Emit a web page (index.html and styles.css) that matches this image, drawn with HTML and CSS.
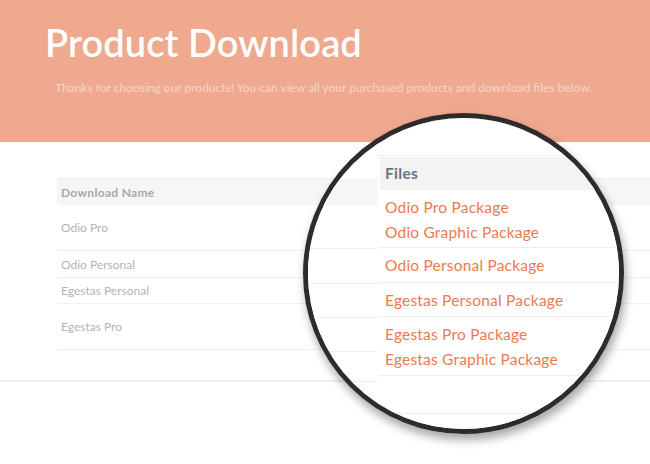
FILE: index.html
```html
<!DOCTYPE html>
<html>
<head>
<meta charset="utf-8">
<link rel="stylesheet" href="styles.css">
</head>
<body>
<header class="hero">
  <h1 class="hero-title">Product Download</h1>
  <p class="hero-sub">Thanks for choosing our products! You can view all your purchased products and download files below.</p>
</header>
<section class="downloads">
  <div class="dl-table">
    <div class="dl-head">Download Name</div>
    <div class="dl-row tall">Odio Pro</div>
    <div class="dl-row">Odio Personal</div>
    <div class="dl-row short">Egestas Personal</div>
    <div class="dl-row tall">Egestas Pro</div>
  </div>
</section>
<div class="lens">
  <div class="zoom">
    <div class="zoom-left">
      <div class="zl-space"></div>
      <div class="zl-band"></div>
      <div class="zl-row r1"></div>
      <div class="zl-row r2"></div>
      <div class="zl-row r3"></div>
      <div class="zl-row r4"></div>
      <div class="zl-row r5"></div>
    </div>
    <div class="zoom-right">
      <div class="zr-space"></div>
      <div class="zr-head">Files</div>
      <div class="zr-row h58"><span class="file">Odio Pro Package</span><span class="file">Odio Graphic Package</span></div>
      <div class="zr-row h35"><span class="file">Odio Personal Package</span></div>
      <div class="zr-row h34"><span class="file">Egestas Personal Package</span></div>
      <div class="zr-row h59"><span class="file">Egestas Pro Package</span><span class="file">Egestas Graphic Package</span></div>
      <div class="zr-row h38"></div>
    </div>
  </div>
</div>
</body>
</html>
```
FILE: styles.css
```css
html, body {
  margin: 0;
  padding: 0;
}
body {
  width: 650px;
  height: 464px;
  overflow: hidden;
  position: relative;
  background: #ffffff;
  font-family: Lato, "Noto Sans", sans-serif;
}
.hero {
  height: 142px;
  box-sizing: border-box;
  background: #eea98e;
  padding: 20px 0 0 45px;
}
.hero-title {
  margin: 0;
  font-size: 38px;
  line-height: 44px;
  font-weight: 600;
  color: #ffffff;
  letter-spacing: 0.1px;
}
.hero-sub {
  margin: 16px 0 0 10px;
  font-size: 12px;
  line-height: 15px;
  color: #f9d6c8;
}
.downloads {
  padding: 36px 0 30px 0;
  border-bottom: 2px solid #efefef;
}
.dl-table {
  margin-left: 57px;
  font-size: 12px;
  color: #b4b4b4;
}
.dl-head {
  height: 27px;
  box-sizing: border-box;
  border-top: 1px solid #efefef;
  background: #f6f6f6;
  font-weight: 700;
  color: #a8a8a8;
  padding-left: 4px;
  letter-spacing: 0.3px;
  display: flex;
  align-items: center;
}
.dl-row {
  height: 27px;
  box-sizing: border-box;
  border-bottom: 1px solid #f1f1f1;
  padding-left: 4px;
  display: flex;
  align-items: center;
}
.dl-row.tall { height: 46px; }
.dl-row.short { height: 26px; }

.lens {
  position: absolute;
  left: 303px;
  top: 113px;
  width: 321px;
  height: 321px;
  box-sizing: border-box;
  border: 5px solid #2c2c2c;
  border-radius: 50%;
  overflow: hidden;
  box-shadow: 2px 6px 10px rgba(0, 0, 0, 0.35), inset 0 0 4px rgba(0, 0, 0, 0.25);
}
.zoom {
  display: flex;
  height: 100%;
  background: #ffffff;
}
.zoom-left {
  width: 70px;
  flex: none;
  display: flex;
  flex-direction: column;
}
.zl-space { height: 60px; }
.zl-band { height: 28px; background: #f6f6f6; }
.zl-row { box-sizing: border-box; border-bottom: 1px solid #efefef; }
.zl-row.r1 { height: 43px; }
.zl-row.r2 { height: 35px; }
.zl-row.r3 { height: 34px; }
.zl-row.r4 { height: 34px; }
.zl-row.r5 { height: 30px; }

.zoom-right {
  flex: 1;
  display: flex;
  flex-direction: column;
}
.zr-space {
  height: 38px;
  box-sizing: border-box;
  border-bottom: 1px solid #ececec;
}
.zr-head {
  margin: 1px 0 0 2px;
  height: 33px;
  background: #f3f3f3;
  padding-left: 5px;
  font-size: 15.5px;
  line-height: 33px;
  font-weight: 700;
  color: #6c7580;
  letter-spacing: 0.3px;
}
.zr-row {
  box-sizing: border-box;
  border-bottom: 1px solid #eeeeee;
  padding: 5px 0 0 7px;
  display: flex;
  flex-direction: column;
}
.h58 { height: 58px; }
.h35 { height: 35px; }
.h34 { height: 34px; }
.h59 { height: 59px; }
.h38 { height: 38px; }
.file {
  display: block;
  font-size: 15.5px;
  line-height: 25px;
  color: #ec7a50;
  white-space: nowrap;
  letter-spacing: 0.2px;
}
```
